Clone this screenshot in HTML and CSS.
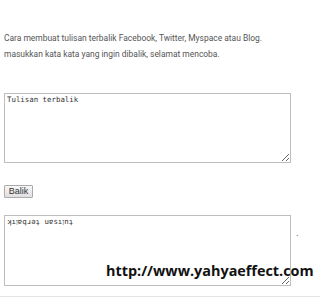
FILE: index.html
```html
<!DOCTYPE html>
<html>
<head>
<meta charset="utf-8">
<link rel="stylesheet" href="styles.css">
</head>
<body>
<div class="page">
  <div class="intro">
    <p class="line">Cara membuat tulisan terbalik Facebook, Twitter, Myspace atau Blog.</p>
    <p class="line">masukkan kata kata yang ingin dibalik, selamat mencoba.</p>
  </div>
  <textarea class="box box-in" spellcheck="false">Tulisan terbalik</textarea>
  <div class="actions"><button class="btn">Balik</button></div>
  <div class="out-row">
    <textarea class="box box-out" spellcheck="false">ʞıןɐqɹǝʇ uɐsıןnʇ</textarea>
    <span class="dot">.</span>
    <span class="watermark">http://www.yahyaeffect.com</span>
  </div>
  <div class="rule"></div>
</div>
</body>
</html>
```
FILE: styles.css
```css
html, body { margin: 0; padding: 0; background: #fff; overflow: hidden; }
.page { padding: 30px 4px 0 4px; width: 312px; }
.intro { display: flex; flex-direction: column; }
.line {
  margin: 0;
  font-family: Roboto, "Liberation Sans", sans-serif;
  font-size: 8.45px;
  line-height: 16px;
  color: #555;
  white-space: nowrap;
}
.box {
  display: block;
  box-sizing: border-box;
  width: 287px;
  height: 70px;
  margin: 0;
  padding: 1px 2px;
  border: 1px solid #bdbdbd;
  font-family: "DejaVu Sans Mono", monospace;
  font-size: 7.4px;
  line-height: 10px;
  color: #333;
  resize: both;
  background: #fff;
}
.box-in { margin-top: 31px; }
.actions { display: flex; margin-top: 22px; }
.btn {
  font-family: "Liberation Sans", Arial, sans-serif;
  font-size: 9px;
  padding: 0 3px;
  height: 13px;
  width: 29px;
  line-height: 11px;
  border: 1px solid #ababab;
  background: linear-gradient(#f7f7f7, #e0e0e0);
  color: #333;
  border-radius: 1px;
}
.out-row { position: relative; margin-top: 17px; }
.box-out { height: 71px; }
.dot {
  position: absolute;
  left: 292px;
  top: 12px;
  font-family: "Liberation Sans", sans-serif;
  font-size: 10px;
  color: #777;
}
.watermark {
  position: absolute;
  left: 102px;
  top: 46px;
  font-family: "Open Sans", sans-serif;
  font-weight: 700;
  font-size: 14.4px;
  line-height: 20px;
  color: #111;
  white-space: nowrap;
}
.rule { margin: 10px -4px 0; border-top: 1px solid #e4e4e4; }
```
